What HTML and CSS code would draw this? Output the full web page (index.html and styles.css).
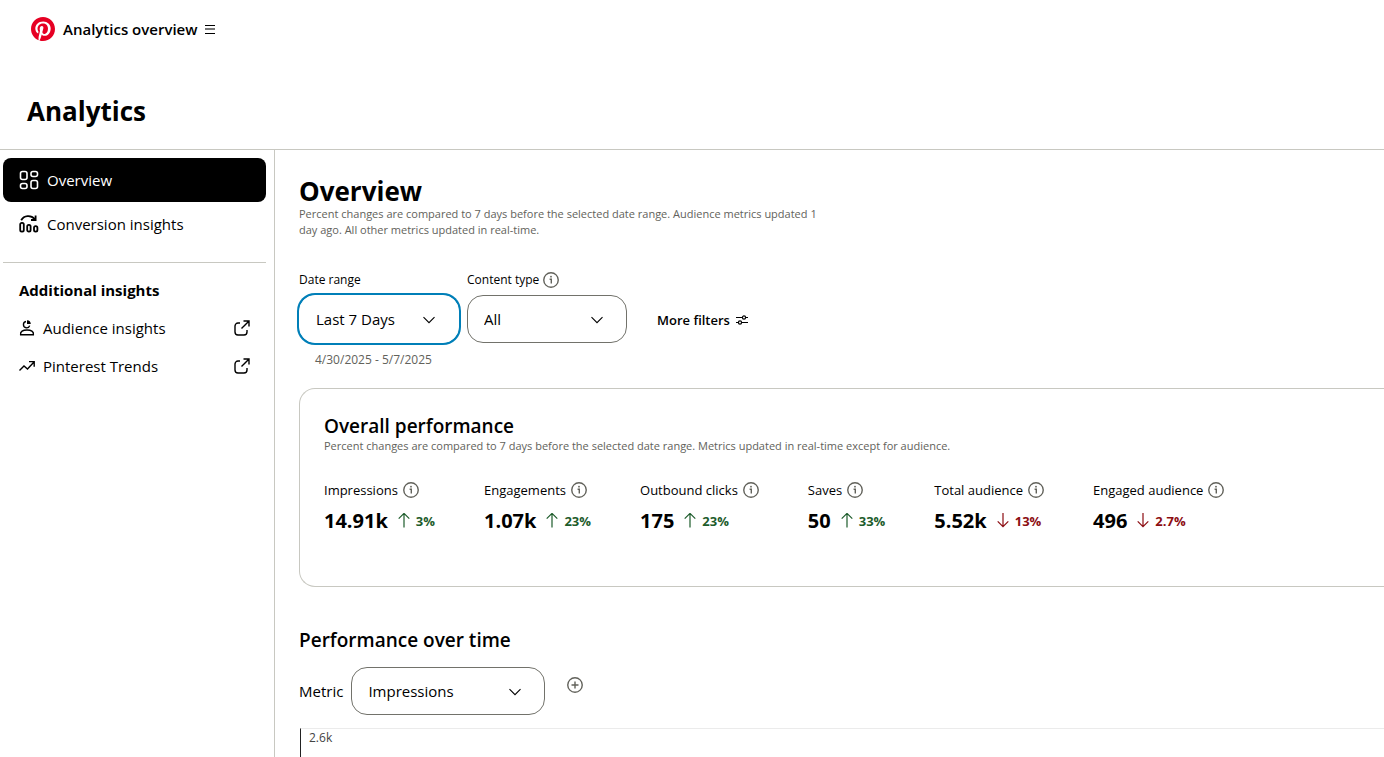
FILE: index.html
```
<!DOCTYPE html>
<html lang="en">

<head>
    <meta charset="UTF-8">
    <meta name="viewport" content="width=device-width, initial-scale=1.0">
    <title>Analytics overview</title>
    <link rel="stylesheet" href="styles.css">
</head>

<body>
    <svg class="sprite" aria-hidden="true">
        <symbol id="info" viewBox="0 0 16 16">
            <circle cx="8" cy="8" r="7.25" fill="none" stroke="currentColor" stroke-width="1.4" />
            <circle cx="8" cy="4.7" r="0.9" fill="currentColor" />
            <path d="M6.6 7.2H8.3V11.6" fill="none" stroke="currentColor" stroke-width="1.4" />
        </symbol>
        <symbol id="chevron" viewBox="0 0 12 12">
            <path d="M0.5 3.2L6 8.7L11.5 3.2" fill="none" stroke="currentColor" stroke-width="1.1" />
        </symbol>
        <symbol id="external" viewBox="0 0 16 16">
            <path d="M6 3H4A3 3 0 0 0 1 6V12A3 3 0 0 0 4 15H10A3 3 0 0 0 13 12V10M9.5 1H15V6.5M14.8 1.2L7.5 8.5" fill="none" stroke="currentColor" stroke-width="1.4" />
        </symbol>
        <symbol id="up" viewBox="0 0 12 16">
            <path d="M6 14.5V0.5M0.7 5.7L6 0.4L11.3 5.7" fill="none" stroke="currentColor" stroke-width="1.2" />
        </symbol>
        <symbol id="down" viewBox="0 0 12 16">
            <path d="M6 0V13.5M0.7 8.3L6 13.6L11.3 8.3" fill="none" stroke="currentColor" stroke-width="1.2" />
        </symbol>
    </svg>

    <header class="topbar">
        <svg class="logo" viewBox="0 0 24 24" aria-label="Pinterest">
            <circle cx="12" cy="12" r="11.5" fill="#fff" />
            <path fill="#e60023" d="M12 0C5.373 0 0 5.373 0 12c0 5.084 3.163 9.426 7.627 11.174-.105-.949-.2-2.405.042-3.441.218-.937 1.407-5.965 1.407-5.965s-.359-.719-.359-1.782c0-1.668.967-2.914 2.171-2.914 1.023 0 1.518.769 1.518 1.69 0 1.029-.655 2.568-.994 3.995-.283 1.194.599 2.169 1.777 2.169 2.133 0 3.772-2.249 3.772-5.495 0-2.873-2.064-4.882-5.012-4.882-3.414 0-5.418 2.561-5.418 5.207 0 1.031.397 2.138.893 2.738a.36.36 0 0 1 .083.345l-.333 1.36c-.053.22-.174.267-.402.161-1.499-.698-2.436-2.889-2.436-4.649 0-3.785 2.75-7.262 7.929-7.262 4.163 0 7.398 2.967 7.398 6.931 0 4.136-2.607 7.464-6.227 7.464-1.216 0-2.359-.631-2.75-1.378l-.748 2.853c-.271 1.043-1.002 2.35-1.492 3.146C9.57 23.812 10.763 24 12 24c6.627 0 12-5.373 12-12S18.627 0 12 0z" />
        </svg>
        <button class="menu-button">
            Analytics overview
            <svg width="10" height="10" viewBox="0 0 10 10"><path d="M0 1.5H10M0 9.5H10" stroke="#000" /><path d="M0 5H10" stroke="#777" stroke-width="2" /></svg>
        </button>
    </header>

    <h1 class="page-title">Analytics</h1>

    <div class="layout">
        <nav class="sidebar">
            <a href="#" class="nav-item active">
                <svg width="20" height="20" viewBox="0 0 20 20" fill="none" stroke="currentColor" stroke-width="1.6">
                    <rect x="1.5" y="1.5" width="6.5" height="8" rx="2" />
                    <rect x="12" y="1.5" width="6.5" height="5" rx="2" />
                    <rect x="1.5" y="13.5" width="6.5" height="5" rx="2" />
                    <rect x="12" y="10.5" width="6.5" height="8" rx="2" />
                </svg>
                Overview
            </a>
            <a href="#" class="nav-item">
                <svg width="20" height="20" viewBox="0 0 20 20" fill="none" stroke="currentColor" stroke-width="1.8">
                    <path d="M2.2 6.2C5 1.2 12 0.8 15.6 5M16.6 1.4V6H12" />
                    <rect x="1.2" y="8.8" width="3.6" height="8.8" rx="1.6" />
                    <rect x="8.2" y="10.8" width="3.4" height="6.8" rx="1.6" />
                    <rect x="15" y="12.2" width="3.4" height="5.4" rx="1.6" />
                </svg>
                Conversion insights
            </a>
            <hr>
            <h2 class="nav-heading">Additional insights</h2>
            <a href="#" class="nav-link">
                <svg width="16" height="16" viewBox="0 0 16 16">
                    <path d="M7 1.5A3.2 3.2 0 1 0 10.7 5.6M1.6 14.8C1 11.5 4 10 8 10S15 11.5 14.4 14.8Z" fill="none" stroke="currentColor" stroke-width="1.4" />
                    <path d="M8 0.2A4 4 0 0 1 11.8 4H8Z" fill="currentColor" />
                </svg>
                <span>Audience insights</span>
                <svg width="16" height="16"><use href="#external" /></svg>
            </a>
            <a href="#" class="nav-link">
                <svg width="16" height="16" viewBox="0 0 16 16" fill="none" stroke="currentColor" stroke-width="1.4">
                    <path d="M0.5 12.5L5 8L8.5 11L15 4M10 3.6H15.2V8.8" />
                </svg>
                <span>Pinterest Trends</span>
                <svg width="16" height="16"><use href="#external" /></svg>
            </a>
        </nav>

        <main class="content">
            <h2 class="title">Overview</h2>
            <p class="note intro">Percent changes are compared to 7 days before the selected date range. Audience metrics updated 1 day ago. All other metrics updated in real-time.</p>

            <div class="filters">
                <div class="field">
                    <label for="date-range">Date range</label>
                    <div class="select focused">
                        <select id="date-range"><option>Last 7 Days</option></select>
                        <svg width="12" height="12"><use href="#chevron" /></svg>
                    </div>
                    <p class="dates">4/30/2025 - 5/7/2025</p>
                </div>
                <div class="field">
                    <div class="field-label">
                        <label for="content-type">Content type</label>
                        <svg class="info"><use href="#info" /></svg>
                    </div>
                    <div class="select">
                        <select id="content-type"><option>All</option></select>
                        <svg width="12" height="12"><use href="#chevron" /></svg>
                    </div>
                </div>
                <button class="more">
                    More filters
                    <svg width="12" height="10" viewBox="0 0 12 10" fill="none" stroke="#000" stroke-width="1.2">
                        <path d="M0 2.5H6M10 2.5H12M0 7.5H2M6 7.5H12" />
                        <circle cx="8" cy="2.5" r="1.6" />
                        <circle cx="4" cy="7.5" r="1.6" />
                    </svg>
                </button>
            </div>

            <section class="card">
                <h3 class="section-title">Overall performance</h3>
                <p class="note">Percent changes are compared to 7 days before the selected date range. Metrics updated in real-time except for audience.</p>
                <div class="metrics">
                    <div class="metric">
                        <div class="name">Impressions <svg class="info"><use href="#info" /></svg></div>
                        <div class="value">14.91k <span class="change up"><svg width="12" height="16"><use href="#up" /></svg>3%</span></div>
                    </div>
                    <div class="metric">
                        <div class="name">Engagements <svg class="info"><use href="#info" /></svg></div>
                        <div class="value">1.07k <span class="change up"><svg width="12" height="16"><use href="#up" /></svg>23%</span></div>
                    </div>
                    <div class="metric">
                        <div class="name">Outbound clicks <svg class="info"><use href="#info" /></svg></div>
                        <div class="value">175 <span class="change up"><svg width="12" height="16"><use href="#up" /></svg>23%</span></div>
                    </div>
                    <div class="metric">
                        <div class="name">Saves <svg class="info"><use href="#info" /></svg></div>
                        <div class="value">50 <span class="change up"><svg width="12" height="16"><use href="#up" /></svg>33%</span></div>
                    </div>
                    <div class="metric">
                        <div class="name">Total audience <svg class="info"><use href="#info" /></svg></div>
                        <div class="value">5.52k <span class="change down"><svg width="12" height="16"><use href="#down" /></svg>13%</span></div>
                    </div>
                    <div class="metric">
                        <div class="name">Engaged audience <svg class="info"><use href="#info" /></svg></div>
                        <div class="value">496 <span class="change down"><svg width="12" height="16"><use href="#down" /></svg>2.7%</span></div>
                    </div>
                </div>
            </section>

            <h3 class="section-title">Performance over time</h3>
            <div class="metric-picker">
                <label for="metric">Metric</label>
                <div class="select wide">
                    <select id="metric"><option>Impressions</option></select>
                    <svg width="12" height="12"><use href="#chevron" /></svg>
                </div>
                <button class="add" aria-label="Add metric">
                    <svg width="16" height="16" viewBox="0 0 16 16" fill="none" stroke="currentColor" stroke-width="1.4">
                        <circle cx="8" cy="8" r="7.25" />
                        <path d="M8 4.5V11.5M4.5 8H11.5" />
                    </svg>
                </button>
            </div>
            <div class="chart">2.6k</div>
        </main>
    </div>
</body>

</html>
```
FILE: styles.css
```
* {
    box-sizing: border-box;
}

body {
    display: flex;
    flex-direction: column;
    height: 100vh;
    margin: 0;
    overflow: hidden;
    background: white;
    color: black;
    font-family: "Segoe UI", "Open Sans", "Noto Sans", sans-serif;
    font-size: 15px;
    line-height: 24px;
}

h1,
h2,
h3,
p {
    margin: 0;
}

a {
    color: inherit;
    text-decoration: none;
}

button {
    display: flex;
    align-items: center;
    gap: 8px;
    padding: 0;
    border: 0;
    background: none;
    color: inherit;
    font: inherit;
    font-weight: 600;
}

svg {
    flex: none;
}

.sprite {
    position: absolute;
    width: 0;
    height: 0;
}

.topbar {
    display: flex;
    align-items: center;
    gap: 8px;
    height: 58px;
    padding-left: 31px;
}

.logo {
    width: 24px;
    height: 24px;
}

.page-title {
    padding: 38px 27px 23px;
    border-bottom: 1px solid #c8c8c1;
    font-size: 26px;
    line-height: 30px;
}

.layout {
    display: flex;
    flex: 1;
    min-height: 0;
}

.sidebar {
    flex: none;
    width: 275px;
    padding: 8px 8px 0 3px;
    border-right: 1px solid #c8c8c1;
}

.nav-item {
    display: flex;
    align-items: center;
    gap: 8px;
    height: 44px;
    padding: 0 16px;
    border-radius: 8px;
}

.nav-item.active {
    background: black;
    color: white;
}

.sidebar hr {
    margin: 16px 0 15px;
    border: 0;
    border-top: 1px solid #c8c8c1;
}

.nav-heading {
    padding: 0 16px;
    margin-bottom: 7px;
    font-size: 15px;
    line-height: 24px;
}

.nav-link {
    display: flex;
    align-items: center;
    gap: 8px;
    height: 38px;
    padding: 0 16px;
}

.nav-link span {
    flex: 1;
}

.content {
    flex: 1;
    min-width: 0;
    padding: 26px 0 0 24px;
    overflow: hidden;
}

.title {
    font-size: 26px;
    line-height: 30px;
}

.note {
    color: #62625b;
    font-size: 11px;
    line-height: 16px;
}

.intro {
    max-width: 536px;
}

.filters {
    display: flex;
    align-items: flex-start;
    gap: 8px;
    margin: 34px 0 20px;
}

.field {
    display: flex;
    flex-direction: column;
    font-size: 12px;
    line-height: 16px;
}

.field-label {
    display: flex;
    gap: 4px;
}

.info {
    width: 16px;
    height: 16px;
    color: #62625b;
}

.select {
    position: relative;
    width: 160px;
}

.field .select {
    margin-top: 7px;
}

.select.wide {
    width: 194px;
}

.select select {
    width: 100%;
    height: 48px;
    padding: 0 40px 0 16px;
    appearance: none;
    border: 1px solid #72726b;
    border-radius: 16px;
    background: white;
    color: black;
    font: inherit;
    font-size: 15px;
    line-height: 24px;
}

.select.focused select {
    border-color: white;
    box-shadow: 0 0 0 2px #007fb8;
}

.select svg {
    position: absolute;
    top: 19px;
    right: 24px;
    pointer-events: none;
}

.dates {
    margin-top: 8px;
    padding-left: 16px;
    color: #62625b;
    line-height: 17px;
}

.more {
    margin: 36px 0 0 22px;
    gap: 6px;
    font-size: 13px;
}

.card {
    margin-bottom: 41px;
    padding: 25px 24px 52px;
    border: 1px solid #c8c8c1;
    border-right: 0;
    border-radius: 16px 0 0 16px;
}

.section-title {
    font-size: 19px;
    font-weight: 600;
    line-height: 24px;
}

.metrics {
    display: flex;
    gap: 49px;
    margin-top: 26px;
}

.name {
    display: flex;
    align-items: center;
    gap: 5px;
    font-size: 13px;
    line-height: 20px;
    white-space: nowrap;
}

.value {
    display: flex;
    align-items: center;
    gap: 10px;
    margin-top: 8px;
    font-size: 20px;
    font-weight: 700;
    line-height: 26px;
}

.change {
    display: flex;
    align-items: center;
    gap: 6px;
    font-size: 13px;
    line-height: 24px;
}

.up {
    color: #1d5c2b;
}

.down {
    color: #8c0d12;
}

.metric-picker {
    display: flex;
    align-items: center;
    gap: 8px;
    margin: 15px 0 13px;
}

.add {
    align-self: flex-start;
    margin: 10px 0 0 14px;
    color: #62625b;
}

.chart {
    height: 240px;
    margin-left: 1px;
    padding-left: 8px;
    border-top: 1px solid #ebebeb;
    border-left: 1px solid #222;
    color: #444;
    font-size: 12px;
    line-height: 18px;
}
```
